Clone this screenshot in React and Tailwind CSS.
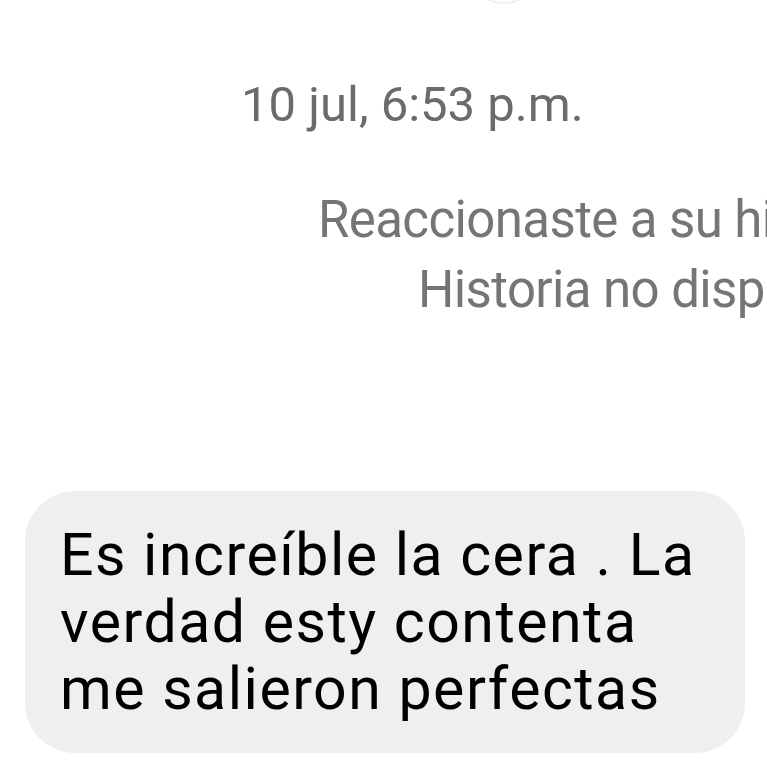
import React from 'react';

const messages = [
    "Es increíble la cera . La",
    "verdad esty contenta",
    "me salieron perfectas",
];

const App = () => {
    return (
        <div className="relative h-[767px] w-full overflow-hidden bg-white font-['Roboto',sans-serif]">
            {/* borde del elemento de arriba */}
            <div className="absolute left-[472px] top-[-58px] h-[62px] w-[64px] rounded-full border-2 border-[#f0f0f0]" />

            {/* Fecha */}
            <div className="pl-[241px] pt-[75px] text-[49px] leading-[60px] text-[#6b6b6b] whitespace-nowrap">
                10 jul, 6:53 p.m.
            </div>

            {/* Reacción a la historia */}
            <div className="mt-[50px] mr-[-132px] flex flex-col items-end text-[51px] leading-[70px] tracking-[-0.6px] text-[#757575] whitespace-nowrap">
                <span>Reaccionaste a su historia</span>
                <span>Historia no disponible</span>
            </div>

            {/* Burbuja */}
            <div className="mt-[166px] ml-[25px] w-[720px] rounded-[50px] bg-[#efefef] px-[35px] pt-[30px] pb-[31px]">
                {messages.map((line, i) => (
                    <p key={i} className="text-[59px] leading-[67px] tracking-[1.5px] text-black whitespace-nowrap">{line}</p>
                ))}
            </div>
        </div>
    );
};

export default App;
